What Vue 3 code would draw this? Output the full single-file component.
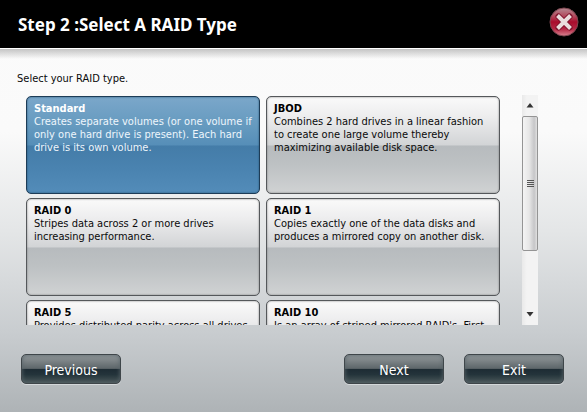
<script setup>
import { ref } from 'vue'

const options = [
  { name: 'Standard', text: 'Creates separate volumes (or one volume if\nonly one hard drive is present). Each hard\ndrive is its own volume.' },
  { name: 'JBOD', text: 'Combines 2 hard drives in a linear fashion\nto create one large volume thereby\nmaximizing available disk space.' },
  { name: 'RAID 0', text: 'Stripes data across 2 or more drives\nincreasing performance.' },
  { name: 'RAID 1', text: 'Copies exactly one of the data disks and\nproduces a mirrored copy on another disk.' },
  { name: 'RAID 5', text: 'Provides distributed parity across all drives' },
  { name: 'RAID 10', text: "Is an array of striped mirrored RAID's. First" },
]

const selected = ref('Standard')
const list = ref(null)
const progress = ref(0)
const thumbShare = 72

function onScroll() {
  const el = list.value
  const room = el.scrollHeight - el.clientHeight
  progress.value = room > 0 ? el.scrollTop / room : 0
}

function scrollList(amount) {
  list.value.scrollBy({ top: amount })
}
</script>

<template>
  <main class="wizard">
    <header class="bar">
      <h1>Step 2 :Select A RAID Type</h1>
      <button class="close" type="button" aria-label="Close">
        <svg viewBox="0 0 30 30" width="30" height="30" aria-hidden="true">
          <defs>
            <linearGradient id="ball" x1="0" y1="0" x2="0" y2="1">
              <stop offset="0" stop-color="#b58a92" />
              <stop offset="0.3" stop-color="#b2465a" />
              <stop offset="0.5" stop-color="#a80c2c" />
              <stop offset="0.75" stop-color="#b52744" />
              <stop offset="1" stop-color="#d98592" />
            </linearGradient>
          </defs>
          <circle cx="15" cy="15" r="14" fill="url(#ball)" stroke="#7d4650" stroke-width="1" />
          <path d="M9.500 9.500L20.500 20.500M20.500 9.500L9.500 20.500" stroke="#7c1029" stroke-width="6" stroke-linecap="round" />
          <path d="M8.500 8.500L21.500 21.500M21.500 8.500L8.500 21.500" stroke="#eadcdc" stroke-width="4" stroke-linecap="butt" />
        </svg>
      </button>
    </header>

    <section class="content">
      <p class="prompt">Select your RAID type.</p>
      <div class="picker">
        <div ref="list" class="list" @scroll="onScroll">
          <button
            v-for="o in options"
            :key="o.name"
            type="button"
            class="card"
            :class="{ active: o.name === selected }"
            :aria-pressed="o.name === selected"
            @click="selected = o.name"
          >
            <strong>{{ o.name }}</strong>
            <span>{{ o.text }}</span>
          </button>
        </div>
        <div class="scroll">
          <button class="arrow" type="button" aria-label="Scroll up" @click="scrollList(-102)">
            <svg viewBox="0 0 8 5" width="8" height="5" aria-hidden="true"><path d="M4 0L7.500 4.500H0.500Z" fill="#333" /></svg>
          </button>
          <div class="track">
            <div :style="{ flexGrow: progress }"></div>
            <div class="thumb" :style="{ height: thumbShare + '%' }">
              <i></i><i></i><i></i><i></i>
            </div>
          </div>
          <button class="arrow" type="button" aria-label="Scroll down" @click="scrollList(102)">
            <svg viewBox="0 0 8 5" width="8" height="5" aria-hidden="true"><path d="M4 4.500L7.500 0H0.500Z" fill="#333" /></svg>
          </button>
        </div>
      </div>
    </section>

    <footer class="actions">
      <button class="push first" type="button">Previous</button>
      <button class="push" type="button">Next</button>
      <button class="push" type="button">Exit</button>
    </footer>
  </main>
</template>

<style>
body {
  margin: 0;
}
</style>

<style scoped>
.wizard {
  box-sizing: border-box;
  display: flex;
  flex-direction: column;
  height: 100vh;
  min-height: 300px;
  font-family: "DejaVu Sans Condensed", "Noto Sans", sans-serif;
  font-size: 11px;
  line-height: 13px;
  color: #0a0a0a;
  background: linear-gradient(#fbfbfb 0%, #fafafa 32%, #e4e6e7 56%, #c8cccf 81%, #aeb3b6 100%);
}

button {
  font-family: inherit;
  cursor: pointer;
}

.bar {
  display: flex;
  align-items: center;
  justify-content: space-between;
  height: 48px;
  padding: 0 8px 0 18px;
  background: #000;
  flex: none;
}

h1 {
  margin: 0;
  padding-top: 2px;
  font-family: "Noto Sans", sans-serif;
  font-size: 17px;
  line-height: 20px;
  font-weight: 700;
  color: #fff;
}

.close {
  display: flex;
  padding: 0;
  border: 0;
  margin-bottom: 4px;
  background: none;
}

.content {
  display: flex;
  flex-direction: column;
  flex: 1;
  min-height: 0;
  padding: 23px 49px 0 26px;
  border-top: 1px solid #fff;
  background: linear-gradient(#c4c4c4, rgba(250, 250, 250, 0) 10px);
}

.prompt {
  margin: 0 0 10px -9px;
}

.picker {
  display: flex;
  flex: 1;
  min-height: 0;
  gap: 22px;
}

.list {
  display: grid;
  flex: 1;
  grid-template-columns: 1fr 1fr;
  grid-auto-rows: 98px;
  gap: 4px 6px;
  padding-top: 1px;
  overflow-y: auto;
  scrollbar-width: none;
}

.card {
  display: flex;
  flex-direction: column;
  padding: 5px 2px 5px 7px;
  border: 1px solid #55585b;
  border-radius: 5px;
  font-size: 11px;
  line-height: 13px;
  text-align: left;
  color: #0a0a0a;
  background: linear-gradient(#fafafa 0%, #ededee 20%, #d2d4d6 50%, #b7bbbe 51%, #bdc1c3 70%, #d0d2d3 100%);
  box-shadow: inset 0 0 2px #777;
}

.card strong {
  color: #000;
}

.card span {
  white-space: pre-line;
}

.card.active {
  color: #eef6fc;
  border-color: #1d3c57;
  background: linear-gradient(#7ba7ca 0%, #659abf 30%, #568eb8 50%, #447ca8 51%, #4a83b0 75%, #538cb9 100%);
  box-shadow: inset 0 0 2px #24506f;
}

.card.active strong {
  color: #fff;
}

.scroll {
  display: flex;
  flex-direction: column;
  width: 16px;
  background: linear-gradient(90deg, #e9e9e9, #f3f3f3 30%, #f3f3f3);
}

.arrow {
  display: flex;
  align-items: center;
  justify-content: center;
  height: 21px;
  padding: 0;
  border: 0;
  background: none;
}

.track {
  display: flex;
  flex: 1;
  flex-direction: column;
  min-height: 0;
}

.thumb {
  box-sizing: border-box;
  display: flex;
  flex: none;
  flex-direction: column;
  align-items: center;
  justify-content: center;
  gap: 1px;
  border: 1px solid #949494;
  border-radius: 2px;
  background: linear-gradient(90deg, #f4f4f4, #e6e6e6 45%, #c6c6c8 80%, #e0e0e0);
}

.thumb i {
  width: 7px;
  height: 1px;
  background: #555;
}

.actions {
  display: flex;
  flex: none;
  gap: 20px;
  padding: 29px 23px 28px 21px;
}

.push {
  width: 100px;
  height: 30px;
  padding: 2px 0 0;
  border: 1px solid #3f464a;
  border-radius: 5px;
  font-size: 14px;
  line-height: 18px;
  color: #fff;
  background: linear-gradient(#91989b 0%, #7d8487 20%, #5d666a 48%, #1d2b33 50%, #24343b 70%, #4a5759 100%);
  box-shadow: inset 0 0 4px #59646a, 0 1px 0 #d4d8da;
}

.first {
  margin-right: auto;
}
</style>
